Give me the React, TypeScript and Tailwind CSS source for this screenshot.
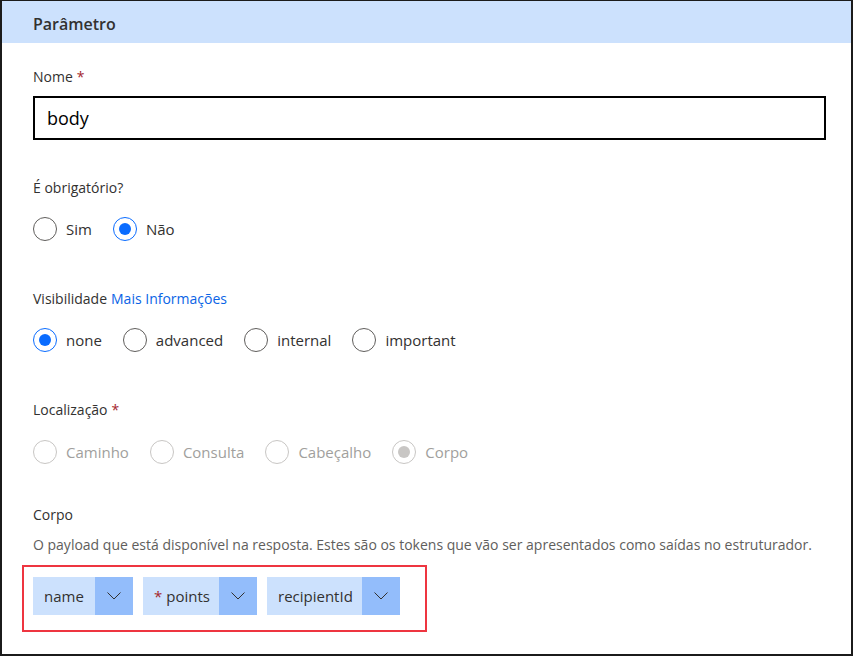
import React from "react";

const font = { fontFamily: '"Open Sans", "Noto Sans", sans-serif' };

function Radio({ label, checked, disabled }: { label: string; checked?: boolean; disabled?: boolean }) {
  let ring = "border-[#605e5c]";
  let dot = "";
  if (disabled) {
    ring = "border-[#c8c6c4]";
    dot = checked ? "bg-[#c8c6c4]" : "";
  } else if (checked) {
    ring = "border-[#0a6cff]";
    dot = "bg-[#0a6cff]";
  }
  return (
    <div className="flex items-center gap-[9px]">
      <div className={`w-[24px] h-[24px] rounded-full border ${ring} flex items-center justify-center`}>
        {dot && <div className={`w-[12px] h-[12px] rounded-full ${dot}`} />}
      </div>
      <span className={`text-[15px] ${disabled ? "text-[#a19f9d]" : "text-[#323130]"}`}>{label}</span>
    </div>
  );
}

function Token({ label, req, w }: { label: string; req?: boolean; w: string }) {
  return (
    <div className={`flex h-[38px] bg-[#cce1fd] ${w}`}>
      <div className="flex-1 flex items-center pl-[11px] text-[15px] text-[#323130]">
        {req && <span className="text-[#a4262c] mr-[4px]">*</span>}
        {label}
      </div>
      <div className="w-[38px] bg-[#93bdfb] flex items-center justify-center">
        <svg width="14" height="8" viewBox="0 0 14 8" fill="none">
          <path d="M0.5 0.5 L7 7 L13.5 0.5" stroke="#323130" strokeWidth="1" />
        </svg>
      </div>
    </div>
  );
}

export default function App() {
  return (
    <div style={font} className="w-[855px] h-[656px] bg-white">
      <div className="w-[853px] h-[656px] border-t border-l-2 border-r-2 border-b-2 border-[#1b1b1b] flex flex-col">
        <div className="h-[42px] bg-[#cce1fd] flex items-center pl-[31px] pt-[3px]">
          <span className="text-[16px] font-semibold text-[#323130]">Parâmetro</span>
        </div>
        <div className="flex flex-col pl-[31px] pr-[24px]">
          <div className="mt-[23px] h-[20px] flex items-center text-[14px] text-[#323130]">
            Nome<span className="text-[#a4262c] ml-[4px]">*</span>
          </div>
          <div className="mt-[10px] h-[44px] border-2 border-black flex items-center pl-[12px] text-[18px] text-black w-[793px]">
            body
          </div>
          <div className="mt-[37px] h-[20px] flex items-center text-[14px] text-[#323130]">É obrigatório?</div>
          <div className="mt-[20px] flex gap-[21px]">
            <Radio label="Sim" />
            <Radio label="Não" checked />
          </div>
          <div className="mt-[47px] h-[20px] flex items-center text-[14px] text-[#323130]">
            Visibilidade<span className="ml-[4px] text-[#0a64e6]">Mais Informações</span>
          </div>
          <div className="mt-[20px] flex gap-[21px]">
            <Radio label="none" checked />
            <Radio label="advanced" />
            <Radio label="internal" />
            <Radio label="important" />
          </div>
          <div className="mt-[47px] h-[20px] flex items-center text-[14px] text-[#323130]">
            Localização<span className="text-[#a4262c] ml-[4px]">*</span>
          </div>
          <div className="mt-[21px] flex gap-[21px]">
            <Radio label="Caminho" disabled />
            <Radio label="Consulta" disabled />
            <Radio label="Cabeçalho" disabled />
            <Radio label="Corpo" disabled checked />
          </div>
          <div className="mt-[40px] h-[20px] flex items-center text-[14px] text-[#323130]">Corpo</div>
          <div className="mt-[10px] h-[20px] flex items-center text-[14px] text-[#605e5c]">
            O payload que está disponível na resposta. Estes são os tokens que vão ser apresentados como saídas no estruturador.
          </div>
          <div className="mt-[11px] -ml-[11px] w-[405px] h-[67px] border-2 border-[#ee3540] pt-[10px] pl-[9px] flex gap-[10px] items-start">
            <Token label="name" w="w-[100px]" />
            <Token label="points" req w="w-[114px]" />
            <Token label="recipientId" w="w-[133px]" />
          </div>
        </div>
      </div>
    </div>
  );
}
